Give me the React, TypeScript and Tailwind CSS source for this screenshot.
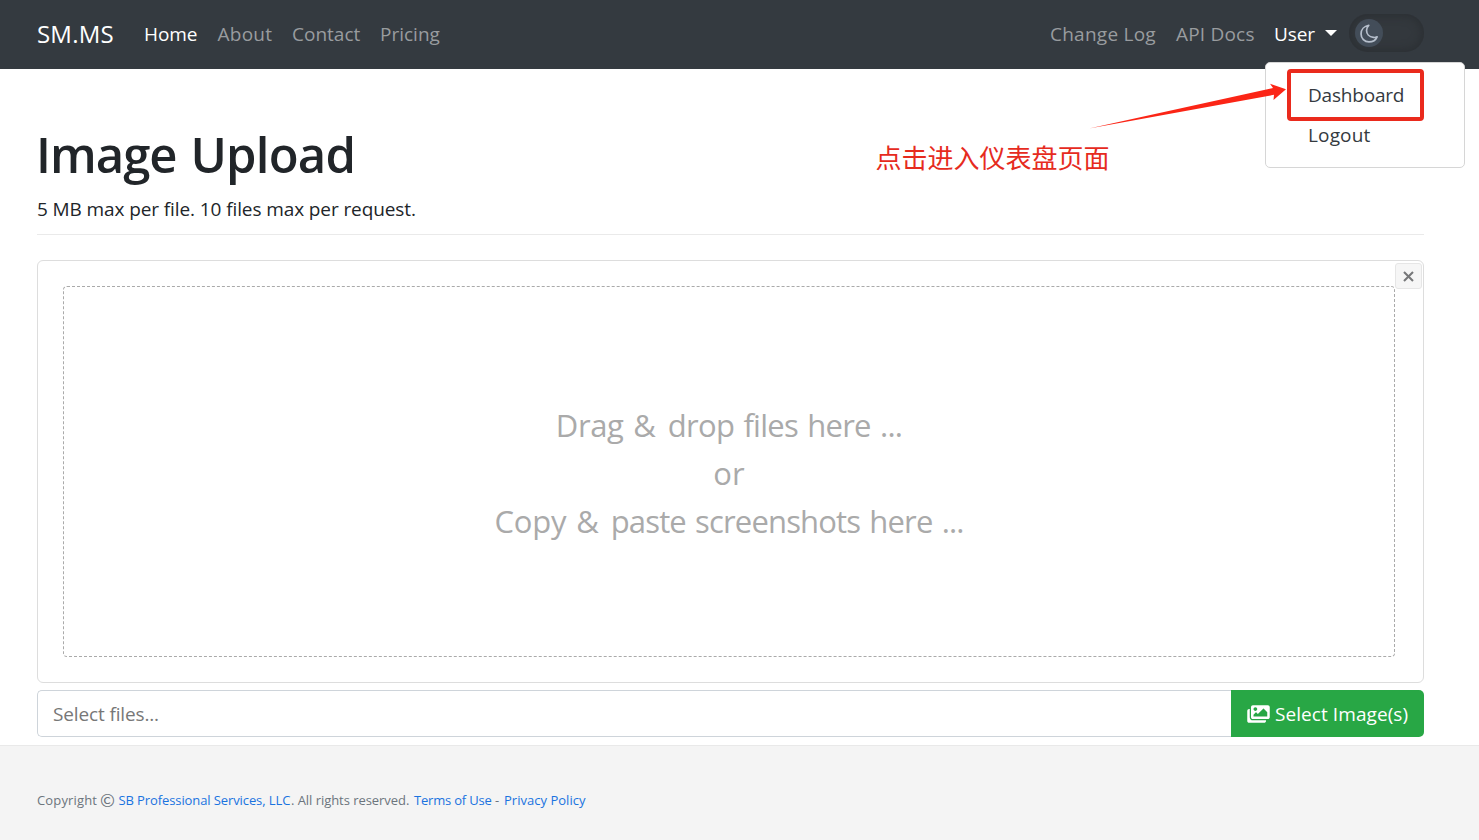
import type { ReactNode } from "react";
import { FaImages } from "react-icons/fa";

function NavLink({ children, className }: { children: ReactNode; className: string }) {
  return (
    <a href="#" className={`block whitespace-nowrap text-[19px] leading-[30px] ${className}`}>
      {children}
    </a>
  );
}

function Navbar() {
  return (
    <header className="relative flex h-[69px] items-center bg-[#343a40] pl-[37px] pr-[55px]">
      <a href="#" className="mt-[-2px] w-[107px] text-[24px] leading-[38px] tracking-[0.2px] text-white">
        SM.MS
      </a>
      <nav className="mt-[-2px] flex flex-1 justify-between">
        <div className="flex">
          <NavLink className="w-[73.500px] tracking-[-0.1px] text-white">Home</NavLink>
          <NavLink className="w-[74.500px] tracking-[0.25px] text-[#999c9f]">About</NavLink>
          <NavLink className="w-[88px] text-[#999c9f]">Contact</NavLink>
          <NavLink className="text-[#999c9f]">Pricing</NavLink>
        </div>
        <div className="flex">
          <NavLink className="w-[126px] tracking-[0.25px] text-[#999c9f]">Change Log</NavLink>
          <NavLink className="w-[98px] tracking-[0.2px] text-[#999c9f]">API Docs</NavLink>
          <NavLink className="flex w-[75px] items-center text-white">
            <span className="w-[51px] tracking-[-0.1px]">User</span>
            <span className="mt-[-2px] border-x-[6px] border-t-[6px] border-x-transparent border-t-white" />
          </NavLink>
        </div>
      </nav>
      <button
        type="button"
        aria-label="Dark mode"
        className="mt-[-3px] flex h-[38px] w-[75px] items-center rounded-full bg-[#33383d] pl-[6px] shadow-[inset_0_0_8px_2px_#2b2f33]"
      >
        <span className="flex size-[28px] items-center justify-center rounded-full bg-[#434d59]">
          <svg width="19" height="19" viewBox="0 0 18 18" fill="none" stroke="#b6bfcc" strokeWidth="1.6" strokeLinejoin="round">
            <path d="M8.3 1.2C3.9 2 1 5.3 1 9.4c0 4.300 3.300 7.600 7.500 7.600 3.400 0 6.500-2 7.700-4.800-1.200.5-2.300.7-3.500.5C8.500 12.400 6.200 9.300 6.200 6c0-1.800.7-3.500 2.100-4.800Z" />
          </svg>
        </span>
      </button>
      <div className="absolute left-[1265px] top-[62px] z-10 flex h-[106px] w-[200px] flex-col rounded-[5px] border border-[#d6d6d6] bg-white pl-[42px] pt-[12px] text-[19px] leading-[40px] text-[#343a40]">
        <a href="#" className="tracking-[-0.2px]">Dashboard</a>
        <a href="#" className="tracking-[0.15px]">Logout</a>
      </div>
    </header>
  );
}

function Annotation() {
  return (
    <div className="pointer-events-none">
      <div className="absolute left-[1287px] top-[69px] z-20 h-[52px] w-[137px] rounded-[4px] border-4 border-[#ea2a1d]" />
      <svg className="absolute left-[1085px] top-[80px] z-20" width="205" height="52" viewBox="0 0 205 52">
        <path d="M4 48.500 188 8 185 3.800 201 9.300 188.500 20 189 14.800Z" fill="#fb2516" />
      </svg>
      <p className="absolute left-[875.500px] top-[138px] whitespace-nowrap font-['Noto_Sans_CJK_SC',sans-serif] text-[26px] leading-[38px] text-[#e62b1e]">
        点击进入仪表盘页面
      </p>
    </div>
  );
}

function DropZone() {
  return (
    <section className="relative h-[423px] rounded-[6px] border border-[#ddd] pb-[25px] pl-[25px] pr-[28px] pt-[25px]">
      <button
        type="button"
        aria-label="Clear"
        className="absolute right-[1px] top-[2px] flex h-[26px] w-[27px] items-center justify-center rounded-[3px] border border-[#e6e6e6] bg-[#f6f6f6]"
      >
        <svg width="11" height="11" viewBox="0 0 11 11" stroke="#77787a" strokeWidth="2.100">
          <path d="M1 1 10 10M10 1 1 10" />
        </svg>
      </button>
      <div className="flex h-[371px] flex-col items-center justify-center rounded-[4px] border border-dashed border-[#aaa] pb-px pt-[4px] text-[31px] leading-[48px] text-[#aaa] [word-spacing:2px]">
        <p className="tracking-[-0.75px]">
          <span className="mr-[3px] tracking-[-0.35px]">Drag &amp;</span> drop files here ...
        </p>
        <p>or</p>
        <p className="tracking-[-0.85px]">
          <span className="mr-[3px] tracking-[-0.2px]">Copy &amp;</span> paste screenshots here ...
        </p>
      </div>
    </section>
  );
}

function FilePicker() {
  return (
    <div className="mt-[7px] flex h-[47px] text-[19px]">
      <div className="flex flex-1 items-center rounded-l-[5px] border border-r-0 border-[#ced4da] pl-[15px] pt-[2px] tracking-[-0.14px] text-[#777]">
        Select files...
      </div>
      <button type="button" className="flex w-[193px] items-center rounded-r-[5px] bg-[#28a745] pl-[16px] text-white">
        <FaImages className="h-[20px] w-[23px]" />
        <span className="ml-[5px] whitespace-nowrap pt-[2px] tracking-[0.07px]">Select Image(s)</span>
      </button>
    </div>
  );
}

function Footer() {
  return (
    <footer className="mt-[8px] flex h-[95px] items-start whitespace-nowrap border-t border-[#e9e9e9] bg-[#f4f4f4] pl-[37px] pt-[44px] text-[13px] leading-[21px] text-[#6c757d]">
      <span className="w-[63px] tracking-[0.15px]">Copyright</span>
      <span className="mt-[-1px] w-[18.500px] font-['Noto_Sans_CJK_SC',sans-serif] text-[18px]">©</span>
      <a href="#" className="w-[172.500px] tracking-[-0.1px] text-[#1a73e0]">SB Professional Services, LLC</a>
      <span className="w-[123px] tracking-[-0.05px]">. All rights reserved.</span>
      <a href="#" className="w-[81px] tracking-[-0.2px] text-[#1a73e0]">Terms of Use</a>
      <span className="w-[9px]">-</span>
      <a href="#" className="tracking-[0.02px] text-[#1a73e0]">Privacy Policy</a>
    </footer>
  );
}

export default function App() {
  return (
    <div className="relative h-[840px] w-[1479px] overflow-hidden bg-white font-['Open_Sans',sans-serif] text-[#212529]">
      <Navbar />
      <main className="pl-[37px] pr-[55px] pt-[55px]">
        <h1 className="flex gap-[14px] whitespace-nowrap text-[49px] font-semibold leading-[60px]">
          <span className="ml-[-1px] tracking-[-1px]">Image</span>
          <span className="tracking-[-0.8px]">Upload</span>
        </h1>
        <p className="mt-[10px] text-[19px] leading-[30px] tracking-[-0.1px]">
          5 MB max per file. 10 files max per request.
        </p>
        <hr className="mb-[25px] mt-[10px] border-[#eaeaea]" />
        <DropZone />
        <FilePicker />
      </main>
      <Footer />
      <Annotation />
    </div>
  );
}
